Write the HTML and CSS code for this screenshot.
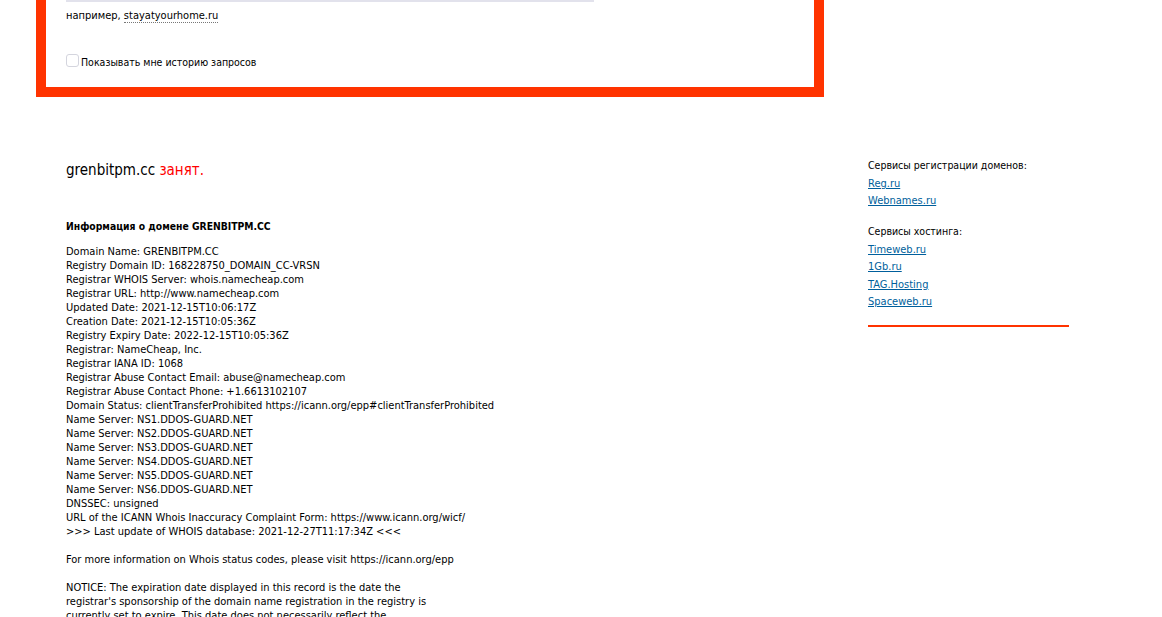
FILE: index.html
```html
<!DOCTYPE html>
<html lang="ru">
<head>
    <meta charset="UTF-8">
    <meta name="viewport" content="width=device-width, initial-scale=1.0">
    <title>WHOIS grenbitpm.cc</title>
    <link rel="stylesheet" href="styles.css">
</head>
<body>
  <div class="page">
    <div class="main">
      <div class="search-box">
        <div class="input-edge"></div>
        <p class="hint">например, <span class="example">stayatyourhome.ru</span></p>
        <label class="history">
          <input type="checkbox" class="check">
          <span>Показывать мне историю запросов</span>
        </label>
      </div>

      <div class="result">
        <h1 class="result-title">grenbitpm.cc <span class="busy">занят.</span></h1>
        <h2 class="info-title">Информация о домене GRENBITPM.CC</h2>
        <div class="whois">Domain Name: GRENBITPM.CC
Registry Domain ID: 168228750_DOMAIN_CC-VRSN
Registrar WHOIS Server: whois.namecheap.com
Registrar URL: http://www.namecheap.com
Updated Date: 2021-12-15T10:06:17Z
Creation Date: 2021-12-15T10:05:36Z
Registry Expiry Date: 2022-12-15T10:05:36Z
Registrar: NameCheap, Inc.
Registrar IANA ID: 1068
Registrar Abuse Contact Email: abuse@namecheap.com
Registrar Abuse Contact Phone: +1.6613102107
Domain Status: clientTransferProhibited https://icann.org/epp#clientTransferProhibited
Name Server: NS1.DDOS-GUARD.NET
Name Server: NS2.DDOS-GUARD.NET
Name Server: NS3.DDOS-GUARD.NET
Name Server: NS4.DDOS-GUARD.NET
Name Server: NS5.DDOS-GUARD.NET
Name Server: NS6.DDOS-GUARD.NET
DNSSEC: unsigned
URL of the ICANN Whois Inaccuracy Complaint Form: https://www.icann.org/wicf/
&gt;&gt;&gt; Last update of WHOIS database: 2021-12-27T11:17:34Z &lt;&lt;&lt;

For more information on Whois status codes, please visit https://icann.org/epp

NOTICE: The expiration date displayed in this record is the date the
registrar's sponsorship of the domain name registration in the registry is
currently set to expire. This date does not necessarily reflect the
expiration date of the domain name registrant's agreement with the
sponsoring registrar.</div>
      </div>
    </div>

    <div class="sidebar">
      <div class="side-block">
        <div class="side-title">Сервисы регистрации доменов:</div>
        <a href="#" class="side-link">Reg.ru</a>
        <a href="#" class="side-link">Webnames.ru</a>
      </div>
      <div class="side-block">
        <div class="side-title">Сервисы хостинга:</div>
        <a href="#" class="side-link">Timeweb.ru</a>
        <a href="#" class="side-link">1Gb.ru</a>
        <a href="#" class="side-link">TAG.Hosting</a>
        <a href="#" class="side-link">Spaceweb.ru</a>
      </div>
      <div class="side-rule"></div>
    </div>
  </div>
</body>
</html>
```

FILE: styles.css
```css
body {
    margin: 0;
    background: #fff;
    color: #000;
    font-family: "DejaVu Sans Condensed", "Liberation Sans", Arial, sans-serif;
    font-size: 11px;
    line-height: 14px;
}

.page {
    display: flex;
    align-items: flex-start;
}

.main {
    width: 788px;
    margin-left: 36px;
}

/* the search form, scrolled so its top is off screen */
.search-box {
    border: 10px solid #ff3300;
    border-top: 0;
    padding: 0 20px 18px 20px;
}

.input-edge {
    width: 528px;
    height: 2px;
    background: #e2e2ec;
}

.hint {
    margin: 7px 0 0 0;
}

.example {
    border-bottom: 1px dotted #777;
}

.history {
    display: flex;
    align-items: flex-end;
    gap: 2px;
    margin-top: 31px;
    font-size: 10.5px;
}

.check {
    appearance: none;
    width: 13px;
    height: 13px;
    margin: 0 0 2px 0;
    border: 1px solid #d4d5de;
    border-radius: 3px;
    background: #fff;
}

.result {
    padding: 0 30px;
    margin-top: 64px;
}

.result-title {
    margin: 0;
    font-size: 15px;
    font-weight: normal;
    line-height: 18px;
}

.busy {
    color: #f00;
}

.info-title {
    margin: 40px 0 12px 0;
    font-size: 10.3px;
    line-height: 14px;
    font-weight: bold;
}

.whois {
    white-space: pre-line;
}

.sidebar {
    margin-left: 44px;
    margin-top: 158px;
    width: 201px;
}

.side-block {
    margin-bottom: 14px;
}

.side-title {
    margin-bottom: 3px;
    font-size: 10.5px;
}

.side-link {
    display: block;
    color: #005f9c;
    line-height: 17.4px;
}

.side-rule {
    height: 2px;
    background: #ff3300;
    margin-top: 15px;
}
```
